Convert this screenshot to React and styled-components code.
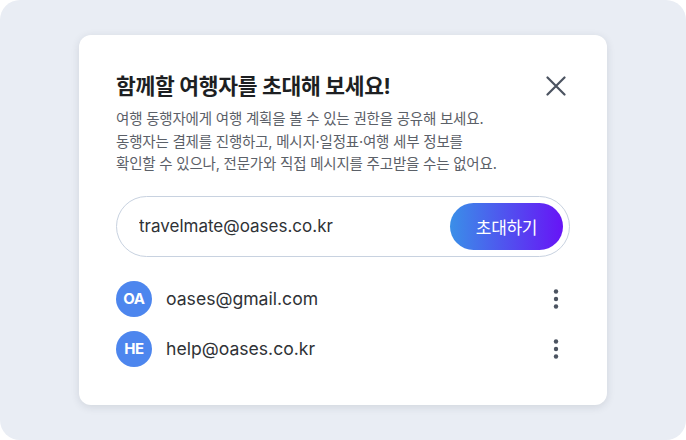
import React from "react";
import styled, { createGlobalStyle } from "styled-components";

const Global = createGlobalStyle`
  html, body { margin: 0; padding: 0; background: #ffffff; }
  body { font-family: "Inter", "Noto Sans CJK KR", sans-serif; }
  * { box-sizing: border-box; }
`;

const Stage = styled.div`
  width: 686px;
  height: 440px;
  background: #e9edf4;
  border-radius: 20px;
  display: flex;
  align-items: center;
  justify-content: center;
`;

const Card = styled.div`
  width: 528px;
  height: 370px;
  background: #fff;
  border-radius: 12px;
  box-shadow: 0 2px 8px rgba(30, 40, 60, 0.12);
  padding: 37px 37px 38px 37px;
  display: flex;
  flex-direction: column;
`;

const Header = styled.div`
  display: flex;
  align-items: center;
  justify-content: space-between;
`;

const Title = styled.h2`
  margin: 0;
  font-family: "Inter", "Noto Sans CJK KR", sans-serif;
  font-size: 21.5px;
  line-height: 28px;
  font-weight: 700;
  color: #1d1f22;
  letter-spacing: -0.3px;
`;

const IconButton = styled.button`
  width: 28px;
  height: 28px;
  padding: 0;
  border: none;
  background: none;
  display: flex;
  align-items: center;
  justify-content: center;
  color: #4b5360;
  cursor: pointer;
`;

const Desc = styled.p`
  margin: 8px 0 0;
  font-size: 14.5px;
  line-height: 22.5px;
  color: #5b6068;
  letter-spacing: -0.2px;
`;

const InputWrap = styled.div`
  margin-top: 20px;
  height: 61px;
  border: 1px solid #c8d2e0;
  border-radius: 31px;
  display: flex;
  align-items: center;
  padding: 0 6px 0 22px;
`;

const Input = styled.input`
  flex: 1;
  border: none;
  outline: none;
  background: transparent;
  font-family: "Inter", "Noto Sans CJK KR", sans-serif;
  font-size: 17px;
  color: #2f3236;
  padding: 0;
`;

const InviteButton = styled.button`
  width: 113px;
  height: 47px;
  border: none;
  border-radius: 24px;
  background: linear-gradient(90deg, #3a8fe8 0%, #6714f6 100%);
  color: #fff;
  font-family: "Inter", "Noto Sans CJK KR", sans-serif;
  font-size: 17px;
  font-weight: 400;
  letter-spacing: -0.3px;
  cursor: pointer;
`;

const List = styled.ul`
  list-style: none;
  margin: 24px 0 0;
  padding: 0;
  display: flex;
  flex-direction: column;
  gap: 14px;
`;

const Row = styled.li`
  display: flex;
  align-items: center;
  height: 36px;
`;

const Avatar = styled.div`
  width: 36px;
  height: 36px;
  border-radius: 50%;
  background: ${(p) => p.$color};
  color: #fff;
  font-size: 15px;
  font-weight: 700;
  display: flex;
  align-items: center;
  justify-content: center;
  letter-spacing: -0.3px;
`;

const Email = styled.span`
  flex: 1;
  margin-left: 14px;
  font-size: 17.6px;
  color: #2f3236;
`;

const CloseIcon = () => (
  <svg width="20" height="20" viewBox="0 0 20 20" fill="none">
    <path d="M1.5 1.5L18.5 18.5M18.5 1.5L1.5 18.5" stroke="currentColor" strokeWidth="2.2" strokeLinecap="round" />
  </svg>
);

const KebabIcon = () => (
  <svg width="6" height="22" viewBox="0 0 6 22" fill="currentColor">
    <circle cx="3" cy="3.5" r="2.2" />
    <circle cx="3" cy="11" r="2.2" />
    <circle cx="3" cy="18.5" r="2.2" />
  </svg>
);

const members = [
  { initials: "OA", email: "oases@gmail.com" },
  { initials: "HE", email: "help@oases.co.kr" },
];

export default function App() {
  return (
    <>
      <Global />
      <Stage>
        <Card>
          <Header>
            <Title>함께할 여행자를 초대해 보세요!</Title>
            <IconButton aria-label="닫기">
              <CloseIcon />
            </IconButton>
          </Header>
          <Desc>
            여행 동행자에게 여행 계획을 볼 수 있는 권한을 공유해 보세요.
            <br />
            동행자는 결제를 진행하고, 메시지·일정표·여행 세부 정보를
            <br />
            확인할 수 있으나, 전문가와 직접 메시지를 주고받을 수는 없어요.
          </Desc>
          <InputWrap>
            <Input defaultValue="travelmate@oases.co.kr" />
            <InviteButton>초대하기</InviteButton>
          </InputWrap>
          <List>
            {members.map((m) => (
              <Row key={m.email}>
                <Avatar $color="#4d86ee">{m.initials}</Avatar>
                <Email>{m.email}</Email>
                <IconButton aria-label="더보기">
                  <KebabIcon />
                </IconButton>
              </Row>
            ))}
          </List>
        </Card>
      </Stage>
    </>
  );
}
